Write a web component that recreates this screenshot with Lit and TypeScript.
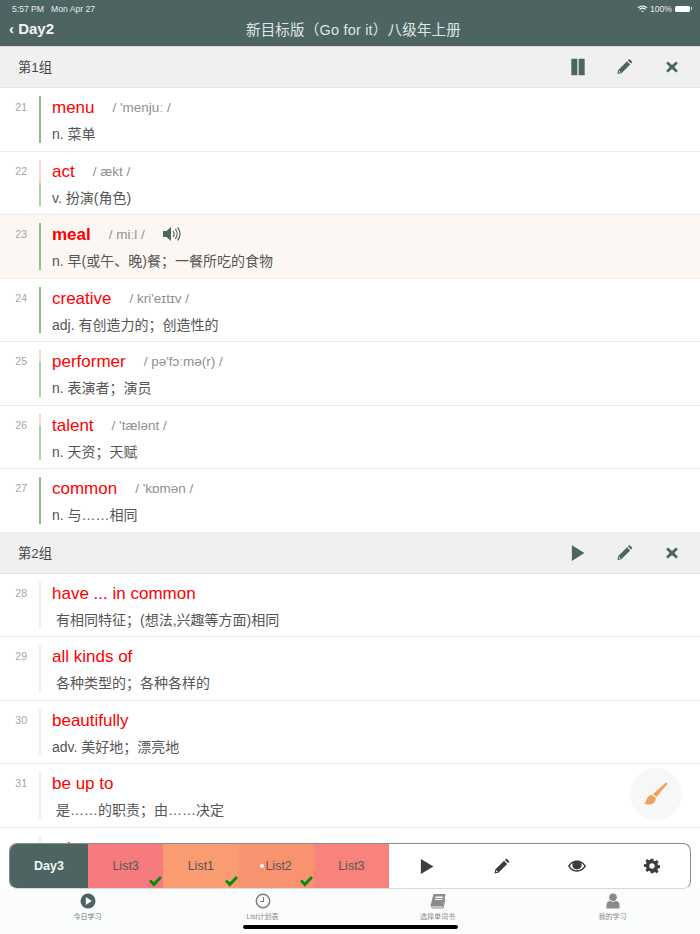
import { LitElement, html, css, svg } from "lit";
import { customElement } from "lit/decorators.js";

type Row = { n: number; w: string; p?: string; d?: string; pink?: number; bar?: "g" | "n"; active?: boolean; indent?: boolean };

const g1: Row[] = [
  { n: 21, w: "menu", p: "/ 'menjuː /", d: "n. 菜单", pink: 0 },
  { n: 22, w: "act", p: "/ ækt /", d: "v. 扮演(角色)", pink: 50 },
  { n: 23, w: "meal", p: "/ miːl /", d: "n. 早(或午、晚)餐；一餐所吃的食物", pink: 0, active: true },
  { n: 24, w: "creative", p: "/ kri'eɪtɪv /", d: "adj. 有创造力的；创造性的", pink: 0 },
  { n: 25, w: "performer", p: "/ pə'fɔːmə(r) /", d: "n. 表演者；演员", pink: 25 },
  { n: 26, w: "talent", p: "/ 'tælənt /", d: "n. 天资；天赋", pink: 25 },
  { n: 27, w: "common", p: "/ 'kɒmən /", d: "n. 与……相同", pink: 0 },
];
const g2: Row[] = [
  { n: 28, w: "have ... in common", d: "有相同特征；(想法,兴趣等方面)相同", bar: "n", indent: true },
  { n: 29, w: "all kinds of", d: "各种类型的；各种各样的", bar: "n", indent: true },
  { n: 30, w: "beautifully", d: "adv. 美好地；漂亮地", bar: "n" },
  { n: 31, w: "be up to", d: "是……的职责；由……决定", bar: "n", indent: true },
  { n: 32, w: "role", p: "/ rəʊl /", bar: "n" },
];

const pencil = svg`<path d="M2 22l1.2-5.600L15.600 4l4.400 4.400L7.600 20.800zM4.600 17.200l-.7 2.900 2.900-.7zM16.800 2.800l1.300-1.300c.5-.5 1.200-.5 1.700 0l2.700 2.700c.5.5.5 1.200 0 1.700l-1.300 1.300z"/>`;
const cross = svg`<path d="M5 2.500l7 6 7-6 3 3-6 6.500 6 6.500-3 3-7-6-7 6-3-3 6-6.500-6-6.500z"/>`;
const play = svg`<path d="M3 1.500L23 12 3 22.500z"/>`;
const pause = svg`<path d="M2 1h9v22H2zM13 1h9v22h-9z"/>`;
const eye = svg`<path fill-rule="evenodd" d="M12 4.500c5.500 0 9.700 3.300 12 7.500-2.300 4.200-6.500 7.500-12 7.500S2.300 16.200 0 12c2.300-4.200 6.500-7.500 12-7.500zM2.300 12c2 3 5.400 5.800 9.700 5.800s7.700-2.800 9.700-5.800c-1.100-1.700-2.600-3.200-4.500-4.300.6.900 1 2 1 3.100 0 3.300-2.800 5.900-6.200 5.900s-6.200-2.600-6.200-5.900c0-1.100.4-2.200 1-3.100C4.900 8.800 3.400 10.300 2.300 12z"/>`;
const gear = svg`<path fill-rule="evenodd" d="M10 1h4l.6 3.100 1.900.8L19.100 3l2.900 2.900-1.900 2.600.8 1.900 3.100.6v4l-3.100.6-.8 1.900 1.900 2.600-2.900 2.900-2.600-1.900-1.900.8L14 23h-4l-.6-3.100-1.900-.8L4.900 21 2 18.100l1.900-2.600-.8-1.900L0 13.500v-4l3.100-.6.8-1.900L2 4.400 4.900 1.500l2.600 1.900 1.900-.8zM12 8a4 4 0 100 8 4 4 0 000-8z"/>`;

@customElement("app-root")
export class AppRoot extends LitElement {
  static styles = css`
    :host {
      display: block;
      width: 700px;
      height: 934px;
      position: relative;
      overflow: hidden;
      background: #fff;
      font-family: "Liberation Sans", "Noto Sans CJK SC", sans-serif;
    }
    .page { display: flex; flex-direction: column; height: 934px; }
    .top { height: 46px; flex: none; background: #4d6462; color: #fff; border-bottom: 1px solid #d9d9d9; box-sizing: content-box; }
    .status { display: flex; justify-content: space-between; align-items: center; height: 17px; padding: 0 8px 0 12px; font-size: 8.600px; color: #e6ecec; }
    .status .left { display: flex; gap: 7px; }
    .status .right { display: flex; align-items: center; gap: 2px; }
    .batt { width: 15px; height: 6px; background: #fff; border-radius: 1.500px; margin-left: 1px; }
    .nub { width: 1px; height: 3px; background: #cfd8d8; margin-left: -1px; }
    .nav { display: grid; grid-template-columns: 1fr auto 1fr; align-items: center; height: 24px; padding: 0 10px; margin-top: -1px; }
    .back { font-size: 15px; font-weight: 700; color: #f0f4f4; margin-left: -1px; }
    .title { font-size: 14.500px; color: #dfe6e6; letter-spacing: .2px; padding-left: 7px; }
    .list { flex: 1; overflow: hidden; min-height: 0; margin-bottom: 46px; }
    .ghead { height: 40px; background: #f0f0f0; border-bottom: 1px solid #e4e4e4; display: flex; align-items: center; padding-left: 18px; font-size: 13.300px; color: #444; }
    .ghead .name { flex: 1; margin-top: -1px; }
    .gicons { display: flex; width: 141px; margin-right: 5px; }
    .gicons span { flex: 1; display: flex; justify-content: center; }
    .gicons svg { fill: #4d6462; display: block; }
    .row { height: 63.500px; box-sizing: border-box; border-bottom: 1px solid #ececec; display: flex; padding: 8px 0; }
    .row.on { background: #fdf7f3; }
    .num { width: 27px; text-align: right; font-size: 10.500px; color: #a5a5a5; padding-top: 5px; flex: none; }
    .bar { width: 2px; margin-left: 12px; flex: none; }
    .body { margin-left: 11px; display: flex; flex-direction: column; }
    .wl { display: flex; align-items: center; height: 22px; margin-top: 2px; }
    .word { font-size: 17px; color: #fe0000; }
    .on .word { font-weight: 700; }
    .ph { font-size: 13.500px; color: #8f8f8f; margin: -1px 0 0 18px; font-family: "Liberation Sans", "DejaVu Sans", sans-serif; }
    .spk { margin: -3px 0 0 18px; fill: #4d6462; stroke: #4d6462; display: block; }
    .def { font-size: 14px; color: #555; margin-top: 7px; line-height: 18px; white-space: pre; }
    .def.ind { padding-left: 4px; }
    .tool { position: absolute; left: 9px; top: 843px; width: 682px; height: 46px; box-sizing: border-box; border: 1px solid #7f908e; border-bottom-color: #d5d9d9; border-radius: 8px; background: #fff; display: flex; overflow: hidden; }
    .day { width: 78px; background: #4d6462; color: #f4f6f6; font-size: 12.500px; font-weight: 700; display: flex; align-items: center; justify-content: center; flex: none; }
    .li { width: 75.250px; flex: none; position: relative; display: flex; align-items: center; justify-content: center; font-size: 12.500px; color: #5a5555; }
    .li .dot { width: 4px; height: 4px; border-radius: 50%; background: #fff; margin-right: 1px; }
    .li .chk { position: absolute; right: 1px; bottom: 1px; fill: #0b8a0b; display: block; }
    .act { flex: 1; display: flex; align-items: center; justify-content: center; }
    .act svg { fill: #3d3d3d; display: block; }
    .fab { position: absolute; left: 630px; top: 768px; width: 52px; height: 52px; border-radius: 50%; background: #f7f7f7; display: flex; align-items: center; justify-content: center; }
    .tabs { height: 45px; flex: none; background: #fbfcfc; display: flex; }
    .tab { flex: 1; display: flex; flex-direction: column; align-items: center; padding-top: 4px; font-size: 7px; color: #8a8a8a; }
    .tab svg { display: block; height: 16px; margin-bottom: 2px; }
    .tab.cur { color: #6d7d7b; }
    .home { position: absolute; left: 243px; top: 925px; width: 215px; height: 3.500px; background: #000; border-radius: 2px; }
  `;

  private barStyle(r: Row) {
    if (r.bar === "n") return "background:#eeeeee";
    const p = r.pink ?? 0;
    if (p === 0) return "background:#8fbc8f";
    return `background:linear-gradient(#f8d6d6 ${p}%, #a9d1a9 ${p}%)`;
  }

  private row(r: Row) {
    return html`<div class="row ${r.active ? "on" : ""}">
      <div class="num">${r.n}</div>
      <div class="bar" style=${this.barStyle(r)}></div>
      <div class="body">
        <div class="wl">
          <span class="word">${r.w}</span>
          ${r.p ? html`<span class="ph">${r.p}</span>` : ""}
          ${r.active
            ? html`<svg class="spk" width="18" height="16" viewBox="0 0 18 16">
                <path stroke="none" d="M0 5h3.500L8 1v14l-4.500-4H0z" />
                <path fill="none" stroke-width="1.200" d="M10 5c1.300 1.700 1.300 4.300 0 6M12.300 3.200c2.300 2.800 2.300 6.800 0 9.600M14.600 1.500c3.200 3.800 3.200 9.200 0 13" />
              </svg>`
            : ""}
        </div>
        ${r.d ? html`<div class="def ${r.indent ? "ind" : ""}">${r.d}</div>` : ""}
      </div>
    </div>`;
  }

  private ghead(name: string, first: unknown, w: number) {
    return html`<div class="ghead">
      <span class="name">${name}</span>
      <div class="gicons">
        <span><svg width=${w} height="18" viewBox="0 0 24 24" preserveAspectRatio="none">${first}</svg></span>
        <span><svg width="17" height="18" viewBox="0 0 24 24">${pencil}</svg></span>
        <span><svg width="14" height="14" viewBox="0 0 24 24" style="margin-top:2px">${cross}</svg></span>
      </div>
    </div>`;
  }

  private li(name: string, color: string, check: boolean, dot = false) {
    return html`<div class="li" style="background:${color}">
      ${dot ? html`<i class="dot"></i>` : ""}${name}
      ${check
        ? html`<svg class="chk" width="13" height="11" viewBox="0 0 13 11"><path d="M0 5.500l2-2 2.800 2.800L11 0l2 2-8.200 8.800z" /></svg>`
        : ""}
    </div>`;
  }

  render() {
    return html`<div class="page">
        <div class="top">
          <div class="status">
            <div class="left"><span>5:57 PM</span><span>Mon Apr 27</span></div>
            <div class="right">
              <svg width="11" height="8" viewBox="0 0 12 9" fill="none" stroke="#fff" stroke-width="1.300">
                <path d="M.8 3.200c3-2.600 7.400-2.600 10.400 0M2.700 5c2-1.700 4.600-1.700 6.600 0" />
                <path d="M4.700 6.800c.8-.6 1.800-.6 2.600 0L6 8.200z" fill="#fff" stroke="none" />
              </svg>
              <span>100%</span><i class="batt"></i><i class="nub"></i>
            </div>
          </div>
          <div class="nav">
            <span class="back">‹ Day2</span>
            <span class="title">新目标版（Go for it）八级年上册</span>
            <span></span>
          </div>
        </div>
        <div class="list">
          ${this.ghead("第1组", pause, 16)} ${g1.map((r) => this.row(r))}
          ${this.ghead("第2组", play, 15)} ${g2.map((r) => this.row(r))}
        </div>
        <div class="tabs">
          <div class="tab cur">
            <svg width="16" height="16" viewBox="0 0 16 16"><circle cx="8" cy="8" r="7.500" fill="#4d6462" /><path d="M5.800 4l6 4-6 4z" fill="#fff" /></svg>
            今日学习
          </div>
          <div class="tab">
            <svg width="16" height="16" viewBox="0 0 16 16" fill="none" stroke="#7d7d7d"><circle cx="8" cy="8" r="6.700" stroke-width="1.500" /><path d="M8.500 4v4.500H5" stroke-width="1.200" /></svg>
            List计划表
          </div>
          <div class="tab">
            <svg width="16" height="16" viewBox="0 0 16 16"><path fill="#8a8a8a" d="M3.500 1h12l-2.500 12.500H1.800C.8 13.500.6 12.700.8 11.800zM5.500 3.500l-.3 1.500h7.500l.3-1.500zM5 6l-.2 1h7.500l.2-1z" fill-rule="evenodd" /><path fill="none" stroke="#8a8a8a" d="M1.500 12.500c0 1.500.4 2.500 1.500 2.500h10.200l1.800-9" /></svg>
            选择单词书
          </div>
          <div class="tab">
            <svg width="16" height="16" viewBox="0 0 16 16"><circle cx="8" cy="4.300" r="3.800" fill="#8a8a8a" /><path fill="#8a8a8a" d="M1.500 15.500v-3.500c0-2.500 1.700-4 3.500-4 1.800 1 4.200 1 6 0 1.800 0 3.500 1.500 3.500 4v3.500z" /></svg>
            我的学习
          </div>
        </div>
      </div>
      <div class="fab">
        <svg width="24" height="24" viewBox="0 0 24 24" fill="#efa15c">
          <path d="M23 .8c.5.4.4 1 .1 1.400L12.500 15l-3.600-3L21.500 1c.5-.4 1-.6 1.500-.2z" />
          <path d="M8 13l3.700 3c.3 3.500-2.500 6.500-6.500 6.500-2 0-4-.4-5-1 1.800-.8 1.800-2.500 2.500-4.500C3.500 14.700 5.500 13 8 13z" />
        </svg>
      </div>
      <div class="tool">
        <div class="day">Day3</div>
        ${this.li("List3", "#f57b7f", true)} ${this.li("List1", "#f99c71", true)}
        ${this.li("List2", "#f8926f", true, true)} ${this.li("List3", "#f7837c", false)}
        <div class="act"><svg width="15" height="17" viewBox="0 0 24 24" preserveAspectRatio="none">${play}</svg></div>
        <div class="act"><svg width="17" height="17" viewBox="0 0 24 24">${pencil}</svg></div>
        <div class="act"><svg width="18" height="18" viewBox="0 0 24 24">${eye}<circle cx="12" cy="10.500" r="4.500" /></svg></div>
        <div class="act"><svg width="16" height="16" viewBox="0 0 24 24">${gear}</svg></div>
      </div>
      <div class="home"></div>`;
  }
}
